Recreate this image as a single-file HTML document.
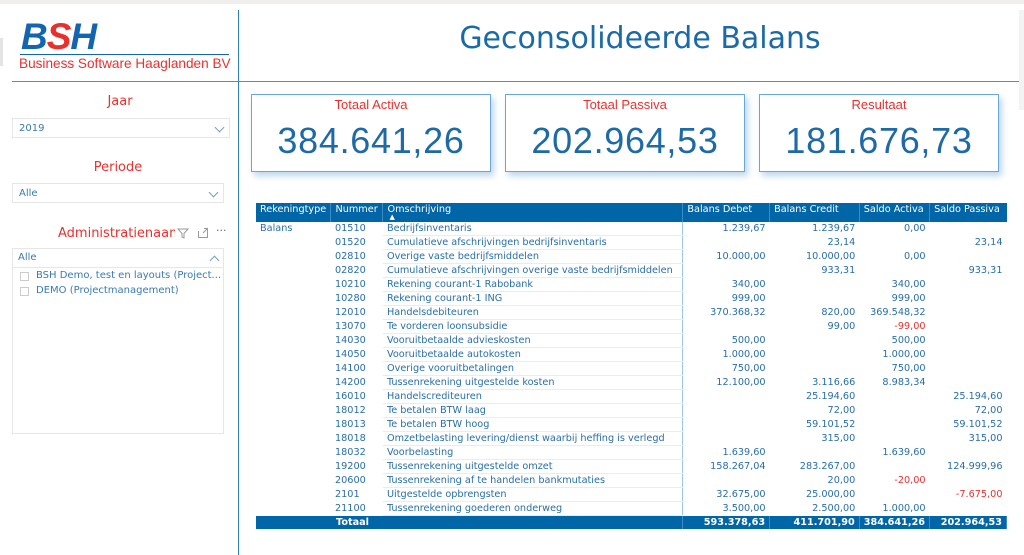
<!DOCTYPE html>
<html><head><meta charset="utf-8"><style>
*{box-sizing:border-box;margin:0;padding:0}
body{width:1024px;height:555px;background:#fff;position:relative;overflow:hidden;font-family:"DejaVu Sans","Liberation Sans",sans-serif;color:#2a6ea8}
.a{position:absolute}
.red{color:#e8312f}
.card{position:absolute;top:94px;width:240px;height:78px;border:1px solid #6aa6d6;box-shadow:3px 4px 6px rgba(70,140,200,.35);background:#fff;text-align:center}
.card .t{font-family:"Liberation Sans",sans-serif;font-size:13px;color:#e8312f;margin-top:2px}
.card .v{font-family:"Liberation Sans",sans-serif;font-size:36px;color:#1e6aa6;margin-top:8px;letter-spacing:.7px}
.sel{position:absolute;border:1px solid #e6e6e6;font-size:10px;color:#3a7ab2;padding:4px 6px;height:20px}
.chev{position:absolute;right:6px;top:5px;width:7px;height:7px;border-right:1px solid #7a9cc0;border-bottom:1px solid #7a9cc0;transform:rotate(45deg)}
table{position:absolute;left:256px;top:203px;border-collapse:collapse;font-size:9.7px;width:751px}
th{background:#0066a8;color:#fff;font-weight:normal;text-align:left;padding:0 4px;height:19px;vertical-align:top;padding-top:1px;border-right:1px solid #3d8ac4}
td{height:13.8px;padding:0 4px;white-space:nowrap;line-height:13px}
td.o{border-bottom:1px solid #e4eef7}
td.n{text-align:right}
td.d{border-left:1px solid #9cc8ec}
.neg{color:#e8312f}
tr.tot td{background:#0066a8;color:#fff;font-weight:bold;height:13px;border-right:1px solid #3d8ac4}
</style></head><body>
<div class="a" style="left:0;top:0;width:1024px;height:4px;background:#efeeec"></div>
<div class="a" style="left:0;top:38px;width:3px;height:28px;background:#e4e4e4"></div>
<div class="a" style="left:238px;top:10px;width:1px;height:545px;background:#2e7fc0"></div>
<div class="a" style="left:12px;top:81px;width:1012px;height:1px;background:#4a90cf"></div>
<div class="a" style="left:1019px;top:10px;width:5px;height:100px;background:#f3f3f3"></div>
<!-- logo -->
<div class="a" style="left:21px;top:17px;font-family:'Liberation Sans',sans-serif;font-weight:bold;font-style:italic;font-size:37px;line-height:40px;letter-spacing:-1px;color:#1465b0">B<span style="color:#e8312f">S</span>H</div>
<div class="a" style="left:20px;top:54px;width:209px;height:1px;background:#1465b0"></div>
<div class="a" style="left:19px;top:56px;font-family:'Liberation Sans',sans-serif;font-size:13.6px;color:#e8312f;white-space:nowrap">Business Software Haaglanden BV</div>
<div class="a" style="left:240px;top:21px;width:800px;text-align:center;font-size:30px;color:#1a6aa8">Geconsolideerde Balans</div>
<!-- slicers -->
<div class="a red" style="left:0;top:94px;width:240px;text-align:center;font-size:13px">Jaar</div>
<div class="sel" style="left:12px;top:118px;width:218px">2019<div class="chev"></div></div>
<div class="a red" style="left:0;top:160px;width:236px;text-align:center;font-size:13px">Periode</div>
<div class="sel" style="left:12px;top:183px;width:212px">Alle<div class="chev"></div></div>
<div class="a red" style="left:58px;top:226px;font-size:13px;white-space:nowrap;width:117px;overflow:hidden">Administratienaam</div>
<svg class="a" style="left:177px;top:228px" width="12" height="11" viewBox="0 0 12 11"><path d="M1 1H11L7 5.5V10L5 9V5.5Z" fill="none" stroke="#999" stroke-width="1"/></svg>
<svg class="a" style="left:198px;top:228px" width="10" height="10" viewBox="0 0 10 10"><path d="M0.5 3V9.5H9.5V0.5H6M5 5L9 1" fill="none" stroke="#999" stroke-width="1"/></svg>
<div class="a" style="left:216px;top:224px;font-size:11px;color:#666">···</div>
<div class="a" style="left:12px;top:248px;width:212px;height:186px;border:1px solid #e6e6e6"></div>
<div class="a" style="left:12px;top:248px;width:212px;height:20px;border-bottom:1px solid #e6e6e6;font-size:10px;color:#3a7ab2;padding:4px 6px">Alle<div class="chev" style="transform:rotate(-135deg);top:9px"></div></div>
<div class="a" style="left:20px;top:272px;width:9px;height:9px;border:1px solid #ccc"></div>
<div class="a" style="left:36px;top:270px;font-size:10px;color:#3a7ab2;white-space:nowrap">BSH Demo, test en layouts (Project...</div>
<div class="a" style="left:20px;top:287px;width:9px;height:9px;border:1px solid #ccc"></div>
<div class="a" style="left:36px;top:285px;font-size:10px;color:#3a7ab2">DEMO (Projectmanagement)</div>
<!-- cards -->
<div class="card" style="left:251px"><div class="t">Totaal Activa</div><div class="v">384.641,26</div></div>
<div class="card" style="left:505px"><div class="t">Totaal Passiva</div><div class="v">202.964,53</div></div>
<div class="card" style="left:759px"><div class="t">Resultaat</div><div class="v">181.676,73</div></div>
<!-- table -->
<table>
<colgroup><col style="width:75px"><col style="width:52px"><col style="width:300px"><col style="width:87px"><col style="width:90px"><col style="width:70px"><col style="width:77px"></colgroup>
<tr><th>Rekeningtype</th><th>Nummer</th><th>Omschrijving<div style="font-size:7px;line-height:5px;margin-left:2px">▲</div></th><th>Balans Debet</th><th>Balans Credit</th><th>Saldo Activa</th><th style="border-right:none">Saldo Passiva</th></tr>
<tr><td>Balans</td><td>01510</td><td class="o">Bedrijfsinventaris</td><td class="n d">1.239,67</td><td class="n">1.239,67</td><td class="n">0,00</td><td class="n"></td></tr>
<tr><td></td><td>01520</td><td class="o">Cumulatieve afschrijvingen bedrijfsinventaris</td><td class="n d"></td><td class="n">23,14</td><td class="n"></td><td class="n">23,14</td></tr>
<tr><td></td><td>02810</td><td class="o">Overige vaste bedrijfsmiddelen</td><td class="n d">10.000,00</td><td class="n">10.000,00</td><td class="n">0,00</td><td class="n"></td></tr>
<tr><td></td><td>02820</td><td class="o">Cumulatieve afschrijvingen overige vaste bedrijfsmiddelen</td><td class="n d"></td><td class="n">933,31</td><td class="n"></td><td class="n">933,31</td></tr>
<tr><td></td><td>10210</td><td class="o">Rekening courant-1 Rabobank</td><td class="n d">340,00</td><td class="n"></td><td class="n">340,00</td><td class="n"></td></tr>
<tr><td></td><td>10280</td><td class="o">Rekening courant-1 ING</td><td class="n d">999,00</td><td class="n"></td><td class="n">999,00</td><td class="n"></td></tr>
<tr><td></td><td>12010</td><td class="o">Handelsdebiteuren</td><td class="n d">370.368,32</td><td class="n">820,00</td><td class="n">369.548,32</td><td class="n"></td></tr>
<tr><td></td><td>13070</td><td class="o">Te vorderen loonsubsidie</td><td class="n d"></td><td class="n">99,00</td><td class="n neg">-99,00</td><td class="n"></td></tr>
<tr><td></td><td>14030</td><td class="o">Vooruitbetaalde advieskosten</td><td class="n d">500,00</td><td class="n"></td><td class="n">500,00</td><td class="n"></td></tr>
<tr><td></td><td>14050</td><td class="o">Vooruitbetaalde autokosten</td><td class="n d">1.000,00</td><td class="n"></td><td class="n">1.000,00</td><td class="n"></td></tr>
<tr><td></td><td>14100</td><td class="o">Overige vooruitbetalingen</td><td class="n d">750,00</td><td class="n"></td><td class="n">750,00</td><td class="n"></td></tr>
<tr><td></td><td>14200</td><td class="o">Tussenrekening uitgestelde kosten</td><td class="n d">12.100,00</td><td class="n">3.116,66</td><td class="n">8.983,34</td><td class="n"></td></tr>
<tr><td></td><td>16010</td><td class="o">Handelscrediteuren</td><td class="n d"></td><td class="n">25.194,60</td><td class="n"></td><td class="n">25.194,60</td></tr>
<tr><td></td><td>18012</td><td class="o">Te betalen BTW laag</td><td class="n d"></td><td class="n">72,00</td><td class="n"></td><td class="n">72,00</td></tr>
<tr><td></td><td>18013</td><td class="o">Te betalen BTW hoog</td><td class="n d"></td><td class="n">59.101,52</td><td class="n"></td><td class="n">59.101,52</td></tr>
<tr><td></td><td>18018</td><td class="o">Omzetbelasting levering/dienst waarbij heffing is verlegd</td><td class="n d"></td><td class="n">315,00</td><td class="n"></td><td class="n">315,00</td></tr>
<tr><td></td><td>18032</td><td class="o">Voorbelasting</td><td class="n d">1.639,60</td><td class="n"></td><td class="n">1.639,60</td><td class="n"></td></tr>
<tr><td></td><td>19200</td><td class="o">Tussenrekening uitgestelde omzet</td><td class="n d">158.267,04</td><td class="n">283.267,00</td><td class="n"></td><td class="n">124.999,96</td></tr>
<tr><td></td><td>20600</td><td class="o">Tussenrekening af te handelen bankmutaties</td><td class="n d"></td><td class="n">20,00</td><td class="n neg">-20,00</td><td class="n"></td></tr>
<tr><td></td><td>2101</td><td class="o">Uitgestelde opbrengsten</td><td class="n d">32.675,00</td><td class="n">25.000,00</td><td class="n"></td><td class="n neg">-7.675,00</td></tr>
<tr><td></td><td>21100</td><td class="o">Tussenrekening goederen onderweg</td><td class="n d">3.500,00</td><td class="n">2.500,00</td><td class="n">1.000,00</td><td class="n"></td></tr>
<tr class="tot"><td colspan="3" style="padding-left:80px">Totaal</td><td class="n">593.378,63</td><td class="n">411.701,90</td><td class="n">384.641,26</td><td class="n">202.964,53</td></tr>
</table>
</body></html>
